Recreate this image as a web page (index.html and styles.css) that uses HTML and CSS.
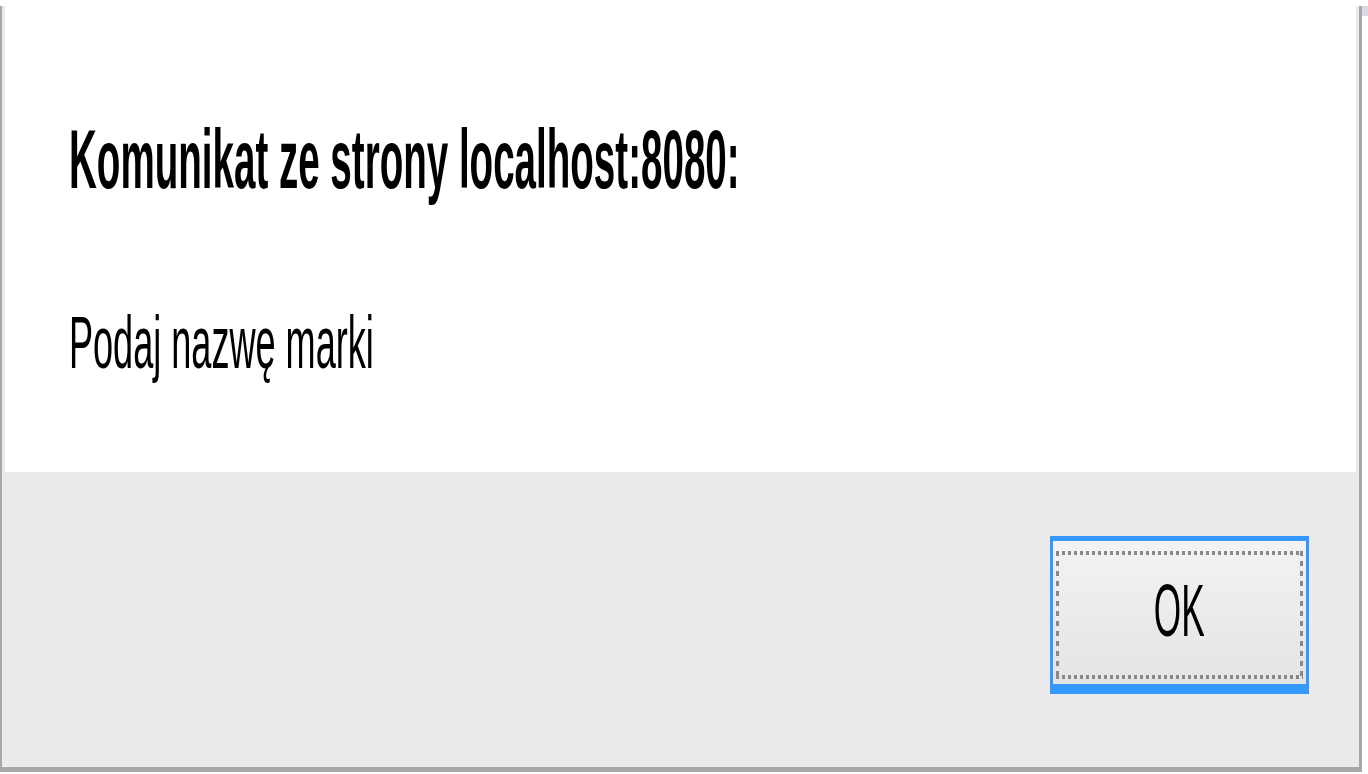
FILE: index.html
```html
<!DOCTYPE html>
<html lang="pl">
<head>
<meta charset="utf-8">
<title>Komunikat</title>
<link rel="stylesheet" href="styles.css">
</head>
<body>
<div class="screen">
  <div class="dialog">
    <div class="content">
      <div class="title"><span class="squeeze">Komunikat ze strony localhost:8080:</span></div>
      <div class="message"><span class="squeeze">Podaj nazwę marki</span></div>
    </div>
    <div class="footer">
      <button class="ok" type="button"><span class="focus"><span class="label">OK</span></span></button>
    </div>
  </div>
  <div class="corner"></div>
</div>
</body>
</html>
```

FILE: styles.css
```css
html, body {
  margin: 0;
  padding: 0;
  background: #ffffff;
}

.screen {
  width: 1368px;
  height: 774px;
  overflow: hidden;
  position: relative;
  background: #ffffff;
  font-family: "Liberation Sans", Arial, sans-serif;
  color: #000;
}

.dialog {
  box-sizing: border-box;
  width: 1362px;
  height: 766px;
  margin-top: 6px;
  border-left: 2px solid #a8a8a8;
  border-right: 3px solid #a8a8a8;
  border-bottom: 5px solid #a8a8a8;
  display: flex;
  flex-direction: column;
}

.content {
  box-sizing: border-box;
  height: 466px;
  background: #ffffff;
  border-left: 3px solid #ececec;
  border-right: 3px solid #ececec;
  padding: 111px 0 0 64px;
  display: flex;
  flex-direction: column;
  gap: 104px;
}

.squeeze {
  display: inline-block;
  white-space: nowrap;
  transform-origin: left center;
}

.title {
  font-size: 84px;
  line-height: 84px;
  height: 84px;
  font-weight: bold;
}

.title .squeeze {
  transform: scaleX(0.459);
}

.message {
  font-size: 75px;
  line-height: 75px;
  height: 75px;
}

.message .squeeze {
  transform: scaleX(0.481);
}

.footer {
  flex: 1;
  background: #ebebeb;
  display: flex;
  justify-content: flex-end;
  align-items: flex-start;
  padding: 64px 50px 0 0;
}

.ok {
  box-sizing: border-box;
  width: 259px;
  height: 158px;
  margin: 0;
  padding: 0;
  border-style: solid;
  border-color: #3399ff;
  border-width: 5px 3px 10px 3px;
  background: linear-gradient(to bottom, #f3f3f3, #e4e4e4);
  font-family: "Liberation Sans", Arial, sans-serif;
  display: flex;
}

.focus {
  flex: 1;
  margin: 10px 3px 5px 3px;
  display: flex;
  align-items: center;
  justify-content: center;
  background-image:
    repeating-linear-gradient(to right, #888888 0 3px, transparent 3px 6px),
    repeating-linear-gradient(to right, #888888 0 3px, transparent 3px 6px),
    repeating-linear-gradient(to bottom, #888888 0 5px, transparent 5px 10px),
    repeating-linear-gradient(to bottom, #888888 0 5px, transparent 5px 10px);
  background-size: 100% 4px, 100% 4px, 3px 100%, 3px 100%;
  background-position: left top, left bottom, left top, right top;
  background-repeat: no-repeat;
}

.label {
  display: inline-block;
  font-size: 75px;
  line-height: 75px;
  color: #000;
  transform: scaleX(0.47);
  margin-top: -10px;
}

.corner {
  position: absolute;
  top: 6px;
  right: 0;
  width: 6px;
  height: 10px;
  background: #dadbe2;
}
```
